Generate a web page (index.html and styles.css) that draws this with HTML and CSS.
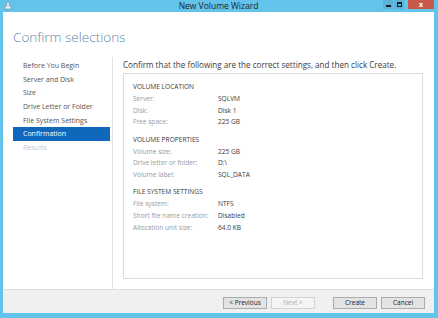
FILE: index.html
```html
<!DOCTYPE html>
<html lang="en">
<head>
<meta charset="UTF-8">
<title>New Volume Wizard</title>
<link rel="stylesheet" href="styles.css">
</head>
<body>

<div class="window">
    <div class="titlebar">
        <svg class="app-icon" width="8" height="9" viewBox="0 0 8 9">
            <rect x="1" y="5" width="6" height="3" fill="#eef6fb" stroke="#6f8fa6" stroke-width="0.7"/>
            <path d="M2 5 L3 1 L5 1 L6 5" fill="#dbe8f2" stroke="#6f8fa6" stroke-width="0.7"/>
        </svg>
        <div class="title">New Volume Wizard</div>
        <div class="controls">
            <span class="ctl min"><i></i></span>
            <span class="ctl max"><i></i></span>
            <span class="ctl close">x</span>
        </div>
    </div>

    <div class="main">
        <div class="header">
            <h1>Confirm selections</h1>
        </div>
        <div class="body">
            <ul class="steps">
                <li>Before You Begin</li>
                <li>Server and Disk</li>
                <li>Size</li>
                <li>Drive Letter or Folder</li>
                <li>File System Settings</li>
                <li class="active">Confirmation</li>
                <li class="disabled">Results</li>
            </ul>
            <div class="content">
                <p class="intro">Confirm that the following are the correct settings, and then click Create.</p>
                <div class="summary">
                    <div class="section">
                        <h2>VOLUME LOCATION</h2>
                        <div class="row"><span class="label">Server:</span><span class="value">SQLVM</span></div>
                        <div class="row"><span class="label">Disk:</span><span class="value">Disk 1</span></div>
                        <div class="row"><span class="label">Free space:</span><span class="value">225 GB</span></div>
                    </div>
                    <div class="section">
                        <h2>VOLUME PROPERTIES</h2>
                        <div class="row"><span class="label">Volume size:</span><span class="value">225 GB</span></div>
                        <div class="row"><span class="label">Drive letter or folder:</span><span class="value">D:\</span></div>
                        <div class="row"><span class="label">Volume label:</span><span class="value">SQL_DATA</span></div>
                    </div>
                    <div class="section">
                        <h2>FILE SYSTEM SETTINGS</h2>
                        <div class="row"><span class="label">File system:</span><span class="value">NTFS</span></div>
                        <div class="row"><span class="label">Short file name creation:</span><span class="value">Disabled</span></div>
                        <div class="row"><span class="label">Allocation unit size:</span><span class="value">64.0 KB</span></div>
                    </div>
                </div>
            </div>
        </div>
    </div>

    <div class="footer">
        <button>&lt; Previous</button>
        <button disabled>Next &gt;</button>
        <button class="create">Create</button>
        <button>Cancel</button>
    </div>
</div>

</body>
</html>
```

FILE: styles.css
```css
body {
    margin: 0;
    padding: 0;
    font-family: "Open Sans", "Noto Sans", sans-serif;
    background: #62c4ea;
}

.window {
    width: 438px;
    height: 318px;
    box-sizing: border-box;
    background: #62c4ea;
    border-left: 3px solid #62c4ea;
    border-right: 4px solid #62c4ea;
    border-bottom: 5px solid #62c4ea;
    display: flex;
    flex-direction: column;
}

.titlebar {
    height: 12px;
    display: flex;
    align-items: flex-start;
    position: relative;
}

.app-icon {
    margin: 1px 0 0 1px;
}

.title {
    position: absolute;
    left: 0;
    right: 0;
    top: 0;
    text-align: center;
    font-size: 8.5px;
    line-height: 11px;
    color: #1e1e1e;
}

.controls {
    margin-left: auto;
    display: flex;
    position: relative;
}

.ctl {
    height: 9px;
    display: flex;
    justify-content: center;
    align-items: center;
    margin-left: 1px;
}

.ctl.min,
.ctl.max {
    width: 10px;
    background: #5ab3da;
}

.ctl.min i {
    width: 5px;
    height: 2px;
    margin-top: 2px;
    background: #1a1a1a;
}

.ctl.max i {
    width: 3px;
    height: 2px;
    border: 1.5px solid #1a1a1a;
    border-top-width: 2px;
}

.ctl.close {
    width: 26px;
    margin-left: 4px;
    background: #c75a4a;
    color: #fff;
    font-size: 7px;
    font-weight: bold;
    line-height: 9px;
}

.main {
    flex: 1;
    background: #fff;
    display: flex;
    flex-direction: column;
}

.header {
    height: 45px;
    padding-left: 10px;
}

.header h1 {
    margin: 0;
    padding-top: 15px;
    font-size: 13.5px;
    line-height: 20px;
    font-weight: 300;
    color: #5c88a6;
}

.body {
    flex: 1;
    display: flex;
}

.steps {
    list-style-type: none;
    margin: 0;
    padding: 2px 2px 0 10px;
    width: 97px;
    border-right: 1px solid #e2e2e2;
}

.steps li {
    height: 13.7px;
    line-height: 13.7px;
    padding-left: 10px;
    font-size: 7px;
    color: #555;
}

.steps li.active {
    background: #1068bd;
    color: #fff;
}

.steps li.disabled {
    color: #c6c6c6;
}

.content {
    flex: 1;
    padding: 0 11px 10px 10px;
    display: flex;
    flex-direction: column;
}

.intro {
    margin: 0;
    height: 16px;
    line-height: 16px;
    font-size: 8.1px;
    color: #3a3a3a;
}

.summary {
    flex: 1;
    border: 1px solid #dcdcdc;
    padding: 7px 0 0 9px;
}

.section {
    margin-bottom: 5.5px;
}

.section h2 {
    margin: 0;
    font-size: 6.6px;
    font-weight: normal;
    line-height: 12px;
    color: #3a3a3a;
}

.row {
    display: flex;
    font-size: 6.6px;
    line-height: 11.7px;
}

.label {
    width: 85px;
    color: #9a9a9a;
}

.value {
    color: #3a3a3a;
}

.footer {
    height: 24px;
    box-sizing: border-box;
    background: #f0f0f0;
    border-top: 1px solid #dedede;
    display: flex;
    align-items: flex-start;
    justify-content: flex-end;
    padding: 7px 9px 0 0;
}

.footer button {
    width: 44px;
    height: 12px;
    padding: 0;
    margin-left: 4px;
    background: #e3e3e3;
    border: 1px solid #acacac;
    font-family: "Open Sans", "Noto Sans", sans-serif;
    font-size: 6.5px;
    line-height: 10px;
    color: #222;
}

.footer button:disabled {
    background: #f4f4f4;
    border-color: #d4d4d4;
    color: #b0b0b0;
}

.footer button.create {
    margin-left: 18px;
}
```
